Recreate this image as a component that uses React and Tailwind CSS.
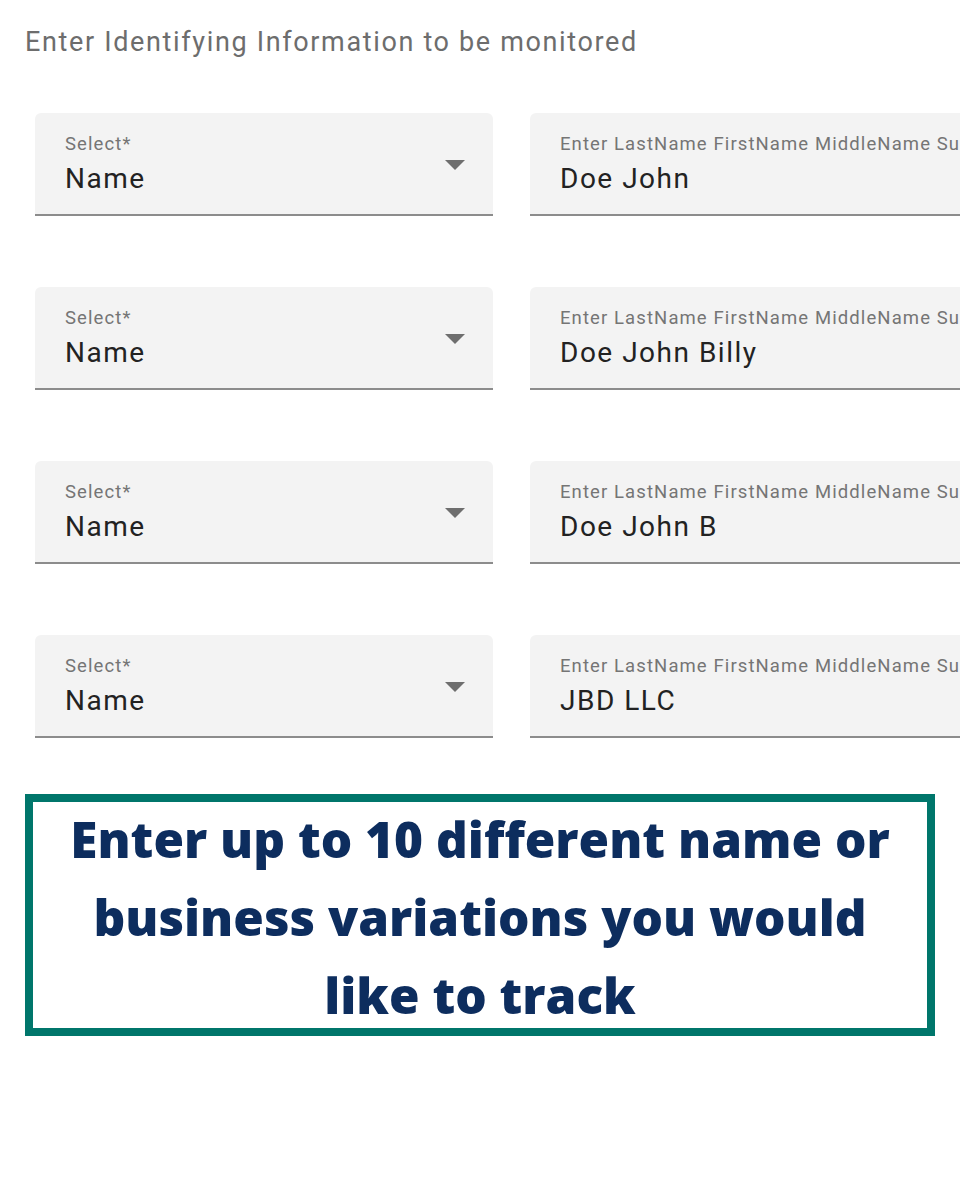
const ROWS = ['Doe John', 'Doe John Billy', 'Doe John B', 'JBD LLC'];

const Field = ({ label, value, arrow }) => (
  <div className="relative h-[103px] w-[458px] shrink-0 rounded-t-[6px] border-b-2 border-[#8c8c8c] bg-[#f3f3f3] pl-[30px] pt-[20px]">
    <div className="whitespace-nowrap text-[18.5px] leading-[22px] tracking-[1.1px] text-[#757575]">{label}</div>
    <div className="mt-[9px] whitespace-nowrap text-[28px] leading-[30px] tracking-[1.5px] text-[#222]">{value}</div>
    {arrow && (
      <svg className="absolute right-[28px] top-[47px]" width="20" height="10" viewBox="0 0 20 10">
        <path d="M0 0 L20 0 L10 10 Z" fill="#6e6e6e" />
      </svg>
    )}
  </div>
);

export default function App() {
  return (
    <div className="h-[1200px] w-[960px] overflow-hidden bg-white font-['Roboto',sans-serif]">
      <div className="whitespace-nowrap pl-[25px] pt-[27px] text-[27px] leading-[30px] tracking-[1.65px] text-[#6d6d6d]">
        Enter Identifying Information to be monitored
      </div>
      <div className="mt-[56px] flex flex-col gap-[71px] pl-[35px]">
        {ROWS.map((v) => (
          <div key={v} className="flex gap-[37px]">
            <Field label="Select*" value="Name" arrow />
            <Field label="Enter LastName FirstName MiddleName Suffix" value={v} />
          </div>
        ))}
      </div>
      <div className="ml-[25px] mt-[56px] flex h-[242px] w-[910px] flex-col items-center justify-center border-[8px] border-[#00766b] bg-white">
        <div className="mt-[4px] whitespace-nowrap text-center font-['Open_Sans',sans-serif] text-[49.5px] font-extrabold leading-[78px] text-[#0d2d5e]">
          Enter up to 10 different name or<br />
          business variations you would<br />
          like to track
        </div>
      </div>
    </div>
  );
}
